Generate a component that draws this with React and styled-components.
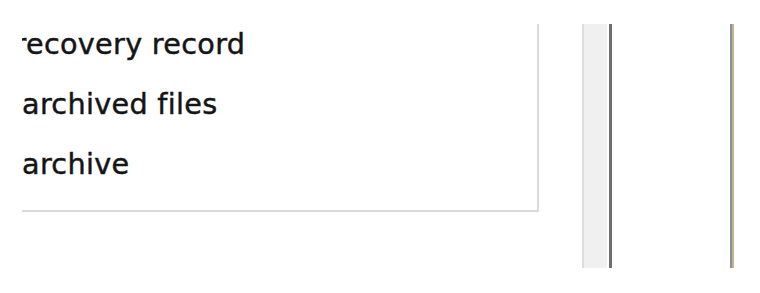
import React from "react";
import styled, { createGlobalStyle } from "styled-components";

const GlobalStyle = createGlobalStyle`
  html, body {
    margin: 0;
    padding: 0;
    background: #ffffff;
  }
`;

const options = [
  { label: "recovery record", shift: -7.5 },
  { label: "archived files", shift: 0 },
  { label: "archive", shift: 0 },
];

const App = () => {
  return (
    <>
      <GlobalStyle />
      <Page>
        <Viewport>
          <OptionsPanel>
            <OptionList>
              {options.map((o) => (
                <OptionRow key={o.label} $shift={o.shift}>
                  {o.label}
                </OptionRow>
              ))}
            </OptionList>
          </OptionsPanel>
          <ScrollTrack />
          <Divider />
          <Spacer />
          <EdgeLine />
        </Viewport>
      </Page>
    </>
  );
};

export default App;

const Page = styled.div`
  width: 760px;
  height: 293px;
  padding-top: 24px;
  padding-left: 22px;
  box-sizing: border-box;
  background: #ffffff;
  font-family: "DejaVu Sans", Verdana, sans-serif;
`;

const Viewport = styled.div`
  display: flex;
  align-items: flex-start;
  height: 244px;
  overflow: hidden;
`;

const OptionsPanel = styled.div`
  width: 517px;
  height: 188px;
  flex-shrink: 0;
  box-sizing: border-box;
  border-right: 2px solid #dadada;
  border-bottom: 2px solid #d9d9d9;
  overflow: hidden;
`;

const OptionList = styled.div`
  display: flex;
  flex-direction: column;
  margin-top: -10px;
`;

const OptionRow = styled.div`
  height: 60px;
  line-height: 60px;
  font-size: 28.7px;
  letter-spacing: 0.3px;
  color: #151515;
  -webkit-text-stroke: 0.45px #151515;
  white-space: nowrap;
  margin-left: ${(p) => p.$shift}px;
`;

const ScrollTrack = styled.div`
  width: 25px;
  height: 244px;
  margin-left: 43px;
  flex-shrink: 0;
  box-sizing: border-box;
  background: #f0f0f0;
  border-left: 2px solid #dcdcdc;
`;

const Divider = styled.div`
  width: 3px;
  height: 244px;
  margin-left: 2px;
  flex-shrink: 0;
  background: #6f6f6f;
`;

const Spacer = styled.div`
  width: 118px;
  flex-shrink: 0;
`;

const EdgeLine = styled.div`
  width: 4px;
  height: 244px;
  flex-shrink: 0;
  background: linear-gradient(to right, #8a8f9a 0 50%, #c4b48a 50% 100%);
`;
